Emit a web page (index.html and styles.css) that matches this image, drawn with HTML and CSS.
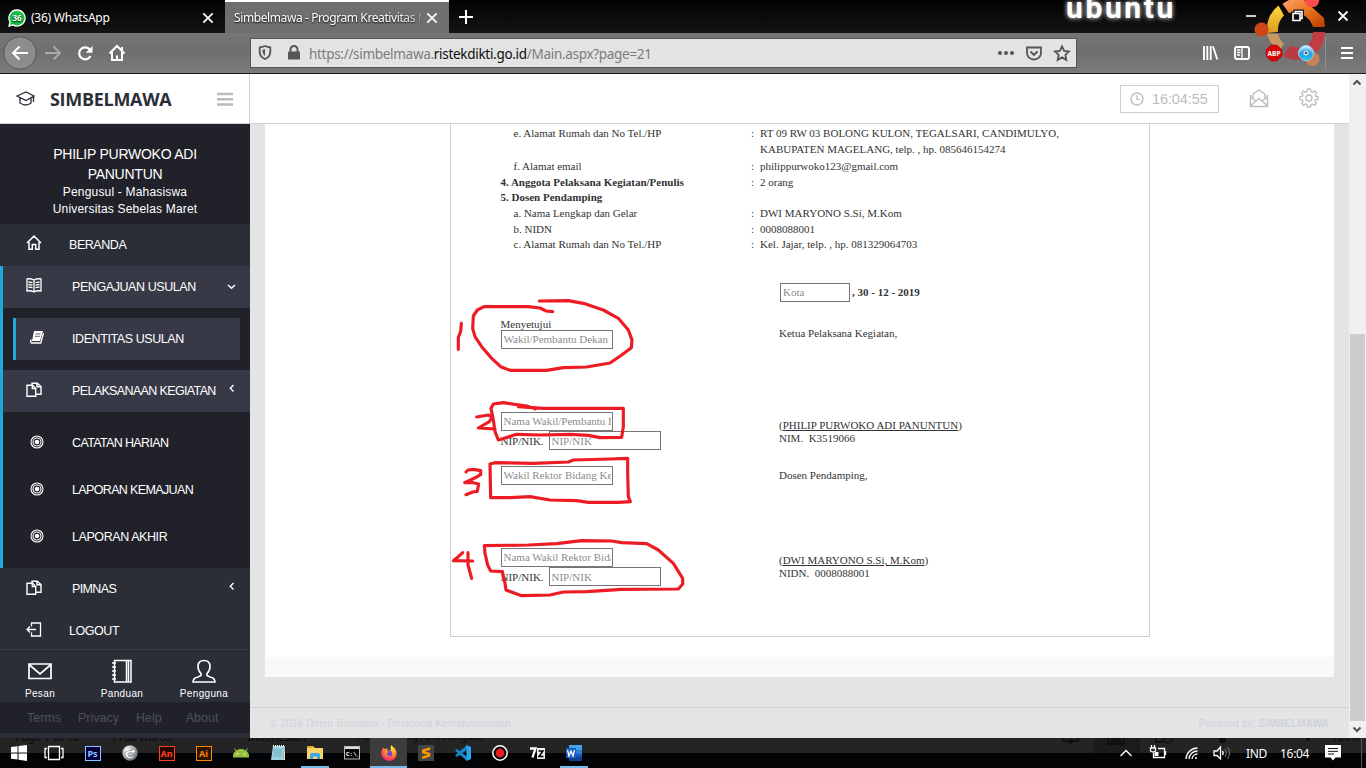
FILE: index.html
```html
<!DOCTYPE html>
<html lang="id">
<head>
<meta charset="utf-8">
<title>Simbelmawa - Program Kreativitas Mahasiswa</title>
<link rel="stylesheet" href="styles.css">
</head>
<body>
<svg width="0" height="0" class="defs">
  <defs>
    <symbol id="copy" viewBox="0 0 16 15"><path d="M6 3.5V1.2H11.2L15 4.5V12.3H10.5M11 1.2V4.7H15M1 3.2H6.5L9.7 6.5V14.2H1ZM6.3 3.2V6.6H9.7" fill="none" stroke="currentColor" stroke-width="1.4"/></symbol>
    <symbol id="target" viewBox="0 0 14 14"><circle cx="7" cy="7" r="6" fill="none" stroke="currentColor" stroke-width="1.1"/><circle cx="7" cy="7" r="4" fill="none" stroke="currentColor" stroke-width="1.1"/><circle cx="7" cy="7" r="2.3" fill="currentColor"/></symbol>
    <symbol id="cross" viewBox="0 0 12 12"><path d="M1.3 1.3L10.7 10.7M10.7 1.3L1.3 10.7" stroke="#f5f5f5" stroke-width="1.9"/></symbol>
    <linearGradient id="gy" x1="0" y1="0" x2="0" y2="1"><stop offset="0" stop-color="#ffd83c"/><stop offset="1" stop-color="#d99a20"/></linearGradient>
    <linearGradient id="go" x1="0" y1="0" x2="1" y2="1"><stop offset="0" stop-color="#ffa064"/><stop offset=".5" stop-color="#e87520"/><stop offset="1" stop-color="#b83a00"/></linearGradient>
    <radialGradient id="gf" cx=".65" cy=".2" r=".9"><stop offset="0" stop-color="#ffe843"/><stop offset=".45" stop-color="#ff9228"/><stop offset=".8" stop-color="#ff3560"/><stop offset="1" stop-color="#d9209a"/></radialGradient>
    <radialGradient id="gb" cx=".5" cy=".85" r=".8"><stop offset="0" stop-color="#1ec0f4"/><stop offset=".6" stop-color="#279fdd"/><stop offset="1" stop-color="#e8f7ff"/></radialGradient>
    <radialGradient id="gs" cx=".35" cy=".3" r=".8"><stop offset="0" stop-color="#fff"/><stop offset="1" stop-color="#5c6468"/></radialGradient>
  </defs>
</svg>

<header class="browser">
  <div class="tabs">
    <div class="tab">
      <svg width="18" height="18" viewBox="0 0 18 18"><path d="M9 1A8 8 0 1 1 5 15.9L1 17L2 13A8 8 0 0 1 9 1Z" fill="#15c143" stroke="#fff" stroke-width="1.3"/><text x="9" y="12.3" class="badge36" text-anchor="middle">36</text></svg>
      <span class="tab-title wa">(36) WhatsApp</span>
      <svg class="x" width="12" height="12"><use href="#cross"/></svg>
    </div>
    <div class="tab active">
      <span class="tab-title">Simbelmawa - Program Kreativitas M</span>
      <svg class="x" width="12" height="12"><use href="#cross"/></svg>
    </div>
    <svg class="plus" width="14" height="14" viewBox="0 0 14 14"><path d="M7 0V14M0 7H14" stroke="#fff" stroke-width="2"/></svg>
  </div>
  <div class="toolbar">
    <svg width="128" height="40" viewBox="0 33 128 40" fill="none" stroke="#fff" stroke-width="2">
      <circle cx="20" cy="53" r="16.3" fill="#8d8d8d" stroke="#555" stroke-width="1"/>
      <path d="M28 53H13M19.5 46.5L13 53L19.5 59.5"/>
      <path d="M45 53H60M53.5 46.5L60 53L53.5 59.5" stroke="#a9a9a9"/>
      <path d="M89.8 49.5A6 6 0 1 0 90.5 56" stroke-width="2.2"/><path d="M92.5 46V52.8H85.7Z" fill="#fff" stroke="none"/>
      <path d="M109.5 53.5L117 46L124.5 53.5M112 52V60H122V52M117 60V55.500"/><path d="M122 47V50"/>
    </svg>
    <div class="url">
      <svg width="50" height="28" viewBox="251 40 50 28" fill="none"><path d="M265 47Q268 48 270.300 48.500V53Q270 58 265 60Q260 58 259.700 53V48.500Q262 48 265 47Z" stroke="#555" stroke-width="1.8"/><path d="M265 50V57Q262.500 55.500 262.500 51Z" fill="#555"/><rect x="288" y="52.500" width="12" height="8" rx="1" fill="#555"/><path d="M290.500 53V50.500A3.500 3.500 0 0 1 297.500 50.500V53" stroke="#555" stroke-width="2"/></svg>
      <span class="address">https://simbelmawa.<b>ristekdikti.go.id</b>/Main.aspx?page=21</span>
      <svg class="url-end" width="80" height="28" viewBox="996 39 80 28" fill="none" stroke="#555" stroke-width="1.8"><g fill="#555" stroke="none"><circle cx="1000" cy="53" r="2"/><circle cx="1006" cy="53" r="2"/><circle cx="1012" cy="53" r="2"/></g><path d="M1027 47.500H1041V53A7 6.500 0 0 1 1027 53Z"/><path d="M1030.500 51.500L1034 55L1037.500 51.500"/><path d="M1062 46.300L1064.100 50.900L1069 51.500L1065.400 54.900L1066.300 59.900L1062 57.400L1057.700 59.900L1058.600 54.900L1055 51.500L1059.900 50.900Z"/></svg>
    </div>
  </div>
  <svg class="wallpaper" width="130" height="73" viewBox="1236 0 130 73">
    <path d="M1278.500 5.500L1284 15.500A21 21 0 0 0 1278 32L1267 33A30 30 0 0 1 1278.500 5.500Z" fill="url(#gy)"/>
    <path d="M1282.500 4A31 31 0 0 1 1289 0H1304L1324 18L1325 27H1313A20 20 0 0 0 1289 13Z" fill="url(#go)"/>
    <circle cx="1261.500" cy="29.500" r="7" fill="#cc4716"/><circle cx="1312" cy="0" r="7.300" fill="#fb4a50"/>
    <path d="M1267 34H1278A21 21 0 0 0 1284 44L1279 51A30 30 0 0 1 1267 34Z" fill="#c99864"/>
    <path d="M1325 32A32 32 0 0 1 1317 52L1306 47A20 20 0 0 0 1313 32Z" fill="#c43c43"/><path d="M1283 56L1290 46L1306 49L1306 59A33 33 0 0 1 1283 56Z" fill="#b93c45"/><circle cx="1312.500" cy="59" r="7" fill="#c78257"/>
  </svg>
  <div class="ubuntu">ubuntu</div>
  <svg class="controls" width="176" height="73" viewBox="1190 0 176 73" fill="none" stroke="#fff" stroke-width="1.600">
    <path d="M1246 16H1256"/><path d="M1293 13.500H1300V20.500H1293ZM1295.500 13V11.500H1302V18.500H1300.500" stroke="#111" stroke-width="4"/><path d="M1293 13.500H1300V20.500H1293ZM1295.500 13V11.500H1302V18.500H1300.500"/><path d="M1338.500 11.500L1347.500 20.500M1347.500 11.500L1338.500 20.500" stroke-width="1.800"/>
    <path d="M1204 46V60M1207.300 46V60M1210.700 46V60M1213 46.500L1217.300 59.500" stroke-width="1.900"/>
    <rect x="1235" y="47" width="14" height="12" rx="2" stroke-width="1.900"/><path d="M1242 47V59M1237 50H1240.500M1237 52.500H1240.500M1237 55H1240" stroke-width="1.300"/>
    <path d="M1271 45H1277L1282 50V56L1277 61H1271L1266 56V50Z" fill="#d40808" stroke="#a00" stroke-width=".5"/><text x="1274" y="56" class="abp" text-anchor="middle">ABP</text>
    <circle cx="1306" cy="53" r="7.500" fill="url(#gb)" stroke="#84d9ff" stroke-width="1"/><circle cx="1306" cy="53" r="2" fill="#456" stroke="#fff" stroke-width="1"/>
    <path d="M1325.500 37V70" stroke="#909090" stroke-width="1"/>
    <path d="M1341 48H1353M1341 53H1353M1341 58H1353" stroke-width="2"/>
  </svg>
</header>

<div class="page">
  <aside class="sidebar">
    <div class="brand">
      <svg width="20" height="16" viewBox="0 0 20 16" fill="none" stroke="#2b2e37" stroke-width="1.300"><path d="M1 5L10 1L18 5L10 9.500ZM4 7V12Q10 16 15 12V7M17.500 5.500V11"/></svg>
      <strong>SIMBELMAWA</strong>
      <svg class="burger" width="16" height="14" viewBox="0 0 16 14"><path d="M0 2H16M0 7.300H16M0 12.500H16" stroke="#b9bcc0" stroke-width="2.600"/></svg>
    </div>
    <div class="profile"><div class="name">PHILIP PURWOKO ADI<br>PANUNTUN</div><div>Pengusul - Mahasiswa<br>Universitas Sebelas Maret</div></div>
    <nav>
      <a class="item home"><svg width="16" height="16" viewBox="0 0 16 16"><path d="M1 8L8 1L15 8M3 7V14.300H6.300V9.500H9.700V14.300H13V7" fill="none" stroke="currentColor" stroke-width="1.500"/></svg><span>BERANDA</span></a>
      <div class="open">
        <a class="item head"><svg width="16" height="15" viewBox="0 0 16 15"><path d="M8 2V14M8 2Q4.500 .2 1 1V13Q5 12.200 8 14Q11 12.200 15 13V1Q11.500 .2 8 2M2.500 4L6.500 4.700M2.500 6.500L6.500 7.200M2.500 9L6.500 9.700M13.500 4L9.500 4.700M13.500 6.500L9.500 7.200M13.500 9L9.500 9.700" fill="none" stroke="currentColor" stroke-width="1.300"/></svg><span>PENGAJUAN USULAN</span><svg class="caret" width="9" height="6" viewBox="0 0 9 6"><path d="M1 1L4.500 4.300L8 1" fill="none" stroke="currentColor" stroke-width="1.500"/></svg></a>
        <div class="sub one"><a class="item selected"><svg width="14" height="13" viewBox="0 0 14 13"><path d="M4 0H13L10 10H2Z" fill="currentColor"/><path d="M13.500 2L10.800 12H1.700Q0 12 1.200 8.500" fill="none" stroke="currentColor" stroke-width="1.300"/><path d="M5.500 3H10.500M4.800 5.300H9.800" stroke="#383946" stroke-width=".8"/></svg><span>IDENTITAS USULAN</span></a></div>
        <a class="item head tight"><svg width="16" height="15"><use href="#copy"/></svg><span>PELAKSANAAN KEGIATAN</span><svg class="caret left" width="6" height="9" viewBox="0 0 6 9"><path d="M4.500 1L1.300 4.200L4.500 7.400" fill="none" stroke="currentColor" stroke-width="1.400"/></svg></a>
        <div class="sub three">
          <a class="item tight"><svg width="14" height="14"><use href="#target"/></svg><span>CATATAN HARIAN</span></a>
          <a class="item tight"><svg width="14" height="14"><use href="#target"/></svg><span>LAPORAN KEMAJUAN</span></a>
          <a class="item"><svg width="14" height="14"><use href="#target"/></svg><span>LAPORAN AKHIR</span></a>
        </div>
      </div>
      <a class="item closed tight"><svg width="16" height="15"><use href="#copy"/></svg><span>PIMNAS</span><svg class="caret left" width="6" height="9" viewBox="0 0 6 9"><path d="M4.500 1L1.300 4.200L4.500 7.400" fill="none" stroke="currentColor" stroke-width="1.400"/></svg></a>
      <a class="item logout"><svg width="16" height="15" viewBox="0 0 16 15"><path d="M5.500 4.500V1H14.500V14H5.500V10.500M1 7.500H10M4 4.500L1 7.500L4 10.500" fill="none" stroke="currentColor" stroke-width="1.300"/></svg><span>LOGOUT</span></a>
    </nav>
    <div class="quick">
      <a><svg width="24" height="24" viewBox="0 0 24 24"><path d="M1 5H23V19.500H1ZM1 5.500L12 15L23 5.500" fill="none" stroke="#fff" stroke-width="1.700"/></svg>Pesan</a>
      <a><svg width="24" height="24" viewBox="0 0 24 24"><path d="M4.500 1.500H21V23H4.500ZM16.500 1.500V23M18.500 1.500V23M2 4H6M2 8H6M2 12H6M2 16H6M2 20H6" fill="none" stroke="#fff" stroke-width="1.500"/></svg>Panduan</a>
      <a><svg width="24" height="24" viewBox="0 0 24 24"><path d="M1 23Q1 19 6 18L9 16.500V14.500Q6 11.500 6 7.500Q6 1.500 12 1.500Q18 1.500 18 7.500Q18 11.500 15 14.500V16.500L18 18Q23 19 23 23Z" fill="none" stroke="#fff" stroke-width="1.600"/></svg>Pengguna</a>
    </div>
    <div class="legal"><a>Terms</a><a>Privacy</a><a>Help</a><a>About</a></div>
  </aside>

  <main>
    <div class="topbar">
      <div class="clock"><svg width="14" height="14" viewBox="0 0 14 14"><circle cx="7" cy="7" r="6" fill="none" stroke="currentColor" stroke-width="1.300"/><path d="M7 3V7.500H10" fill="none" stroke="currentColor" stroke-width="1.200"/></svg><span>16:04:55</span></div>
      <svg class="mail" width="20" height="19" viewBox="0 0 20 19"><path d="M4 7V5L10 1L16 5V7M1.500 6V17.500H18.500V6M1.500 8L7 12L1.500 17M18.500 8L13 12L18.500 17M4 7V10L7 12L10 9.500L13 12L16 10V7" fill="none" stroke="#b9bec3" stroke-width="1.400"/></svg>
      <svg class="gear" width="20" height="20" viewBox="0 0 20 20" fill="none" stroke="#b9bec3" stroke-width="1.300"><circle cx="10" cy="10" r="3"/><path d="M8.500 1H11.500L12 3.600L13.600 4.300L15.800 2.800L17.700 4.800L16.200 6.900L16.700 8.200L19 8.700V11.400L16.500 11.900L15.900 13.400L17.400 15.500L15.500 17.400L13.400 15.900L12 16.500L11.500 19H8.500L8 16.500L6.500 15.900L4.500 17.400L2.600 15.500L4 13.400L3.500 12L1 11.400V8.700L3.500 8.200L4 6.900L2.600 4.800L4.500 2.800L6.500 4.200L8 3.600Z"/></svg>
    </div>
    <div class="panel">
      <section class="doc">
        <dl>
          <dt class="in">e. Alamat Rumah dan No Tel./HP</dt><dd>:</dd><dd>RT 09 RW 03 BOLONG KULON, TEGALSARI, CANDIMULYO,<br>KABUPATEN MAGELANG, telp. , hp. 085646154274</dd>
          <dt class="in">f. Alamat email</dt><dd>:</dd><dd>philippurwoko123@gmail.com</dd>
          <dt class="b">4. Anggota Pelaksana Kegiatan/Penulis</dt><dd>:</dd><dd>2 orang</dd>
          <dt class="b">5. Dosen Pendamping</dt><dd></dd><dd></dd>
          <dt class="in">a. Nama Lengkap dan Gelar</dt><dd>:</dd><dd>DWI MARYONO S.Si, M.Kom</dd>
          <dt class="in">b. NIDN</dt><dd>:</dd><dd>0008088001</dd>
          <dt class="in">c. Alamat Rumah dan No Tel./HP</dt><dd>:</dd><dd>Kel. Jajar, telp. , hp. 081329064703</dd>
        </dl>
        <div class="signatures">
          <div class="approve">
            <label>Menyetujui</label>
            <input placeholder="Wakil/Pembantu Dekan">
            <input class="gap" placeholder="Nama Wakil/Pembantu Dekan">
            <div class="nip"><span>NIP/NIK.</span><input placeholder="NIP/NIK"></div>
            <input class="rector" placeholder="Wakil Rektor Bidang Kemahasiswaan">
            <input class="gap" placeholder="Nama Wakil Rektor Bidang">
            <div class="nip"><span>NIP/NIK.</span><input placeholder="NIP/NIK"></div>
          </div>
          <div class="signers">
            <div class="date"><input placeholder="Kota"><b>, 30 - 12 - 2019</b></div>
            <p class="lead">Ketua Pelaksana Kegiatan,</p>
            <p class="signer">(<u>PHILIP PURWOKO ADI PANUNTUN</u>)</p>
            <p>NIM. &nbsp;K3519066</p>
            <p class="advisor">Dosen Pendamping,</p>
            <p class="signer2">(<u>DWI MARYONO S.Si, M.Kom</u>)</p>
            <p>NIDN. &nbsp;0008088001</p>
          </div>
        </div>
      </section>
    </div>
    <footer><span>© 2016 Dirjen Belmawa - Direktorat Kemahasiswaan.</span><span>Powered by: <b>SIMBELMAWA</b></span></footer>
  </main>
  <div class="scrollbar">
    <svg width="17" height="17" viewBox="0 0 17 17"><path d="M4.500 10.500L8 7L11.500 10.500" fill="none" stroke="#505050" stroke-width="2"/></svg>
    <div class="thumb"></div>
    <svg width="17" height="17" viewBox="0 0 17 17"><path d="M4.500 6.500L8 10L11.500 6.500" fill="none" stroke="#505050" stroke-width="2"/></svg>
  </div>
</div>

<svg class="marks" width="260" height="360" viewBox="0 0 780 1080" fill="none" stroke="#ed1c24" stroke-width="9.500" stroke-linecap="round" stroke-linejoin="round">
  <path d="M64 130L62 155L55 172V208"/>
  <path d="M338 95L318 93L300 84L265 80H132L112 90L100 108L98 145L105 170L125 200L155 235L182 260L210 271H320L370 263L440 261L510 249L545 225L574 203L576 180L565 150L535 115L490 90L430 70L385 62L298 63"/>
  <path d="M110 411L145 405L157 411L148 425L115 444L165 447"/>
  <path d="M286 387L260 378L190 368L160 372L153 385L160 420L165 455L175 480L230 463L300 465L390 463L445 466L480 473L545 472L550 440V385H310L235 380"/>
  <g transform="translate(0 480)">
    <path d="M78 96L84 90L100 88L122 92V104L104 114L74 128H100L116 132L112 154L98 156L78 164"/>
    <path d="M150 72L165 68L280 70L385 66L400 60L510 57L563 55V100L565 170L571 185L535 187H445L410 182L330 180L270 170L210 173H152Z"/>
    <path d="M68 338L55 350L40 362L98 363M84 338V375L95 415"/>
    <path d="M133 317L265 315L350 311L425 302L515 303L545 308L620 311L655 330L700 370L728 415V432L715 447L545 448L440 455L370 456L330 465L245 467L198 450L195 430L187 395L152 393L143 375L135 340Z"/>
  </g>
</svg>

<footer class="taskbar">
  <div class="ghost"><span class="g1">Page 1 of 16</span><span class="g2">7766 words</span><span class="g3">Indonesian</span><span class="g4">Accessibility: Investigate</span><span class="g5">100%</span>
    <svg width="366" height="15" viewBox="0 0 366 15" fill="none" stroke="#0c0c0c" stroke-width="1.300"><path d="M94 0H140V15H94Z" fill="#1b1b1b" stroke="none"/><path d="M63 0V3H78V0M70.500 0V5M68 3L70.500 5L73 3M108 0V6H124V0M111 1H121M111 3.500H121M156 0V4H163"/><circle cx="168" cy="1" r="4"/><path d="M220 0H225V4H220ZM307 0H309V2H307Z" fill="#0c0c0c"/></svg>
  </div>
  <div class="apps">
    <a><svg width="16" height="16" viewBox="0 0 16 16" fill="#fff"><path d="M0 2L6.500 1.200V7.500H0ZM7.500 1L16 0V7.500H7.500ZM0 8.500H6.500V14.500L0 13.800ZM7.500 8.500H16V16L7.500 14.800Z"/></svg></a>
    <a class="views"><svg width="20" height="16" viewBox="0 0 20 16" fill="none" stroke="#fff" stroke-width="1.300"><path d="M4.500 1.500H15.500V14.500H4.500ZM3 3.500H1V12.500H3M17 3.500H19V12.500H17"/></svg></a>
    <a><i class="app ps">Ps</i></a>
    <a><svg width="16" height="16" viewBox="0 0 16 16"><circle cx="8" cy="8" r="7.700" fill="url(#gs)"/><path d="M3 9Q4 5 10 5.500L9 3.500L14 6L10 9L9.500 7Q5 7 6 11Q9 13 13 10Q10 15 6 13Q3 12 3 9Z" fill="#fff" stroke="#667" stroke-width=".5"/></svg></a>
    <a><i class="app an">An</i></a>
    <a><i class="app ai">Ai</i></a>
    <a><svg width="16" height="16" viewBox="0 0 16 16"><path d="M0 12A8 7.500 0 0 1 16 12ZM3 6L1.500 3.500M13 6L14.500 3.500" fill="#97c03d" stroke="#97c03d"/><circle cx="4.500" cy="9" r=".8" fill="#fff"/><circle cx="11.500" cy="9" r=".8" fill="#fff"/></svg></a>
    <a><svg width="16" height="16" viewBox="0 0 16 16"><path d="M3 1H15L13 15H1Z" fill="#9bd0dd"/><path d="M13 15L15 1V15Z" fill="#e9e2cc"/><path d="M3 1H15" stroke="#e7eff2" stroke-width="2" stroke-dasharray="1 1"/><path d="M4 5H12M3.800 7H11.800M3.500 9H11.500M3.200 11H11" stroke="#5d9fb3" stroke-width=".7"/></svg></a>
    <a class="running"><svg width="16" height="16" viewBox="0 0 16 16"><path d="M0 1H6L8 3H16V14H0Z" fill="#f8d36b"/><path d="M0 1H6L7 3H0Z" fill="#e4a824"/><path d="M3 14V10Q3 8 5 8H11Q13 8 13 10V14H10V11.500H6V14Z" fill="#3aa8e8"/></svg></a>
    <a><svg width="16" height="14" viewBox="0 0 16 14"><rect x=".5" y=".5" width="15" height="12.500" fill="#090909" stroke="#bbb"/><path d="M1 2H15" stroke="#d7dbe4" stroke-width="2"/><text x="2" y="10" class="cmd">C:\_</text></svg></a>
    <a class="current"><svg width="16" height="16" viewBox="0 0 16 16"><path d="M8 16A8 8 0 0 1 .3 7Q.7 4 2.300 2.500L3.500 4L6 3.500Q7 4 6 6L10 5Q9 2 10.500 0Q12 2.500 14 3.500Q17 8 14.500 12.500Q12 16 8 16Z" fill="url(#gf)"/><circle cx="8" cy="8.500" r="3.200" fill="#7b43d2"/><path d="M3 6Q6 4.500 8 7L5.500 8.500Q6 11 9 11Q6 13 4 10Z" fill="#ff8a29"/></svg></a>
    <a><svg width="16" height="16" viewBox="0 0 16 16"><rect width="16" height="16" fill="#444"/><path d="M12 3.500L5.200 5.600V7.300L11 8.900V10.600L4.200 12.700" fill="none" stroke="#ff9800" stroke-width="2.500"/></svg></a>
    <a><svg width="16" height="16" viewBox="0 0 16 16"><path d="M12 0V4.500L2 12L0 10.500ZM0 5.500L2 4L12 11.500V16Z" fill="#1587cc"/><path d="M11.500 0L16 2V14L11.500 16Z" fill="#29a8ef"/></svg></a>
    <a><svg width="16" height="16" viewBox="0 0 16 16"><circle cx="8" cy="8" r="7.200" fill="#050505" stroke="#fff" stroke-width="1.500"/><circle cx="8" cy="8" r="4.400" fill="#ed1c24"/></svg></a>
    <a><svg width="16" height="14" viewBox="0 0 16 14"><rect x="8" y="2" width="8" height="11" fill="#eee"/><path d="M1 2.500H6.500L3.500 11.500" fill="none" stroke="#fff" stroke-width="2.300"/><path d="M9.500 5H14L10 10.500H14.500" fill="none" stroke="#000" stroke-width="1.500"/></svg></a>
    <a class="running"><svg width="16" height="16" viewBox="0 0 16 16"><path d="M3 0H16V16H3Z" fill="#185abd"/><path d="M3 0H16V5H3Z" fill="#41a5ee"/><path d="M3 5H16V9H3Z" fill="#2b7cd3"/><path d="M3 12H16V16H3Z" fill="#103f91"/><rect y="3" width="10" height="10" fill="#185abd"/><path d="M1.500 5L3 11L5 6L7 11L8.500 5" fill="none" stroke="#fff" stroke-width="1.300"/></svg></a>
  </div>
  <div class="tray">
    <svg width="116" height="30" viewBox="1118 738 116 30" fill="none" stroke="#fff" stroke-width="1.300"><path d="M1120.500 756L1126 750.500L1131.500 756"/><path d="M1158 748.500H1164.500V757.500H1153.500V753M1165.500 751V755M1151.500 745V748M1154.500 745V748M1150.500 748H1155.500V751Q1153 753 1150.500 751Z"/><rect x="1154.500" y="752" width="4" height="4" fill="#fff" stroke="none"/><path d="M1186 759A11.500 11.500 0 0 1 1197.500 748M1189 759A8.500 8.500 0 0 1 1197.500 751M1192 759A5.500 5.500 0 0 1 1197.500 754M1195 758H1197"/><path d="M1214 751H1217L1220.500 747V759L1217 755.500H1214Z"/><path d="M1222.500 751Q1224 753 1222.500 755"/><path d="M1225 749Q1228 753 1225 757M1227.500 747Q1231.500 753 1227.500 759" stroke="#777" stroke-width="1"/></svg>
    <span class="lang">IND</span><span class="time">16:04</span>
    <svg width="16" height="16" viewBox="0 0 16 16"><path d="M0 0H16V12.500H10.500L8 15.500L5.500 12.500H0Z" fill="#fff"/><path d="M3 3.500H13M3 6.300H13M3 9H9" stroke="#111"/></svg>
  </div>
</footer>
</body>
</html>
```
FILE: styles.css
```css
* { box-sizing: border-box; }
body { margin: 0; width: 1366px; height: 768px; overflow: hidden; position: relative; font-family: "Liberation Sans", Arial, sans-serif; display: flex; flex-direction: column; }
svg { display: block; flex: none; }
p, dl, dd { margin: 0; }
.defs { position: absolute; }

.browser { height: 74px; flex: none; position: relative; border-bottom: 1px solid #1b1b1b; font-family: "Noto Sans", sans-serif; }
.tabs { height: 33px; display: flex; background: linear-gradient(#020202, #141414); color: #fff; font-size: 12px; }
.tab { width: 225px; display: flex; align-items: center; padding: 2px 11px 0 8px; text-shadow: 0 1px 2px #000; }
.tab-title { white-space: nowrap; letter-spacing: -.25px; line-height: 20px; }
.wa { margin-left: 5px; }
.tab .x { margin-left: auto; }
.tab.active { width: 224px; background: #6f6f6f; border-top: 2px solid #fff; padding-top: 0; padding-left: 9px; }
.active .tab-title { letter-spacing: -.4px; width: 188px; overflow: hidden; -webkit-mask-image: linear-gradient(90deg, #000 160px, rgba(0,0,0,.6) 182px, transparent 188px); }
.plus { margin: 10px; }
.badge36 { font: bold 8px "Noto Sans", sans-serif; fill: #fff; }
.abp { font: bold 6.5px "Noto Sans", sans-serif; fill: #fff; stroke: none; }
.toolbar { height: 40px; display: flex; background: linear-gradient(#767676, #6f6f6f 45%, #7b7b7b); }
.url { margin: 5px 0 0 122px; width: 827px; height: 30px; border: 1px solid #555; background: #e3e3e3; display: flex; align-items: center; }
.address { margin-left: 8px; font-size: 13.5px; letter-spacing: -.3px; color: #7c7c7c; white-space: nowrap; padding-top: 1px; }
.address b { font-weight: 400; color: #0c0c0c; }
.url-end { margin-left: auto; }
.wallpaper { position: absolute; right: 0; top: 0; }
.controls { position: absolute; right: 0; top: 0; }
.ubuntu { position: absolute; left: 1061px; top: 0; width: 122px; height: 28px; overflow: hidden; color: #fff; font: bold 30px/15px Roboto, sans-serif; letter-spacing: 2.6px; padding-left: 5px; text-shadow: 0 0 5px #fff; }

.page { height: 664px; flex: none; display: flex; }
.sidebar { width: 250px; background: #2b2e37; color: #fff; display: flex; flex-direction: column; }
.brand { height: 50px; background: #fff; border: solid #d0d2d4; border-width: 0 1px 1px 0; color: #2b2e37; display: flex; align-items: center; padding: 1px 16px 0; }
.brand strong { margin-left: 14px; font: 700 18px "Open Sans", sans-serif; letter-spacing: -.3px; }
.burger { margin-left: auto; }
.profile { height: 100px; background: #212129; text-align: center; padding-top: 20px; font-size: 12px; line-height: 17px; letter-spacing: .18px; }
.name { font-size: 14px; line-height: 20px; letter-spacing: -.25px; }
.profile div + div { padding-top: 0; }
.item { height: 42px; display: flex; align-items: center; font-size: 12.5px; padding-left: 26px; color: #fff; letter-spacing: -.45px; white-space: nowrap; }
.item span { margin-left: 27px; margin-top: -1px; }
.item > svg:first-child { margin-top: -4px; }
.open { border-left: 3px solid #1fa8dc; background: #212129; }
.nav .item, .open .item { letter-spacing: -.42px; }
.open .tight, .tight { letter-spacing: -.64px; }
.head { background: #383946; padding-left: 23px; }
.head span, .closed span { margin-left: 30px; }
.caret { margin-left: auto; margin-right: 14px; }
.caret.left { margin-right: 15px; margin-top: -6px; }
.sub.one { padding: 10px; height: 62px; }
.selected { background: #383946; border-left: 3px solid #1fa8dc; padding-left: 14px; }
.selected span { margin-left: 28px; }
.sub.three { height: 156px; padding-top: 7px; }
.three .item { height: 47px; padding-left: 27px; }
.three span { margin: 0 0 0 28px; }
.three .item > svg:first-child { margin-top: -2px; }
.logout { height: 39px; padding-top: 4px; }
.quick { height: 53px; border-top: 1px solid #3c3d40; display: flex; justify-content: space-between; padding: 9px 26px 0 20px; font-size: 10px; line-height: 14px; }
.quick a { width: 40px; display: flex; flex-direction: column; align-items: center; gap: 4px; white-space: nowrap; letter-spacing: .35px; }
.legal { height: 31px; background: #212129; color: #4b4f61; font-size: 12.500px; display: flex; align-items: center; padding-left: 27px; gap: 17px; }
.legal a:nth-child(4) { margin-left: 7px; }

main { width: 1099px; background: #e3e4e6; display: flex; flex-direction: column; }
.topbar { height: 50px; background: #fff; border-bottom: 1px solid #cfd1d3; display: flex; align-items: center; padding-left: 870px; }
.clock { width: 99px; height: 28px; border: 1px solid #cbd0d5; display: flex; align-items: center; gap: 8px; padding-left: 9px; color: #b9bec3; font-size: 14.5px; letter-spacing: -.1px; }
.mail { margin-left: 30px; } .gear { margin-left: 30px; margin-top: -2px; }
.panel { margin: 0 15px; height: 553px; background: #fff; border-bottom: 20px solid #f7f9fb; padding-left: 185px; }
.doc { width: 700px; height: 513px; border: 1px solid #d0d0d0; border-top: 0; padding-left: 49.5px; font: 11px "Liberation Serif", "Times New Roman", serif; color: #333; }
.doc dl { display: grid; grid-template-columns: 250.5px 9px 1fr; line-height: 15.700px; padding-top: 2px; height: 127px; align-content: start; grid-template-rows: 33px; grid-auto-rows: 15.700px; }
.in { padding-left: 13px; } .b { font-weight: 700; }
.doc p, .doc label { line-height: 12px; display: block; }
.signatures { display: grid; grid-template-columns: 278.5px 1fr; }
.doc input { width: 112px; height: 19px; border: 1px solid #767676; padding: 0 1px 1px 2px; margin: 0; font: inherit; display: block; background: #fff; border-radius: 0; }
.doc input::placeholder { color: #8c8c8c; opacity: 1; }
.approve { padding-top: 67px; }
.doc .gap { margin-top: 63px; } .doc .rector { margin-top: 16px; }
.nip { display: flex; align-items: center; } .nip span { width: 48px; }
.doc .nip input { padding: 1px 2px; }
.signers { padding-top: 32px; }
.date { display: flex; align-items: center; gap: 2px; margin-left: 1px; }
.doc .date input { width: 70px; }
.date b { padding-bottom: 2px; }
.lead { margin-top: 25px; } .signer { margin: 80px 0 1px; } .advisor { margin-top: 25px; } .signer2 { margin: 73px 0 1px; }
main footer { margin-top: 30px; border-top: 1px solid #d0d3d5; height: 31px; display: flex; align-items: center; justify-content: space-between; padding: 0 20px; font-size: 10px; letter-spacing: .15px; color: #d0d3d6; }
.scrollbar { width: 17px; background: #f0f0f0; display: flex; flex-direction: column; }
.thumb { height: 387px; background: #cdcdcd; margin: auto 1px 0; }
.marks { position: absolute; left: 440px; top: 280px; }

.taskbar { height: 30px; position: relative; display: flex; justify-content: space-between; background: linear-gradient(#242424 15px, #030405 15px); color: #fff; }
.ghost { position: absolute; inset: 0; overflow: hidden; color: #090909; font: 11.5px/16px "Noto Sans", sans-serif; letter-spacing: -.2px; white-space: nowrap; }
.ghost span { position: absolute; top: -9px; }
.ghost svg { position: absolute; right: 0; top: 0; }
.ghost .g4 { top: -10px; }
.g1 { left: 15px; } .g2 { left: 111px; } .g3 { left: 247px; } .g4 { left: 357px; } .g5 { left: 1331px; }
.apps { display: flex; position: relative; }
.apps a { width: 37px; height: 30px; display: flex; align-items: center; justify-content: center; }
.apps .views { padding-right: 3px; }
.apps .running { background: linear-gradient(#76b9ed, #76b9ed) center bottom / 28px 2px no-repeat; }
.apps .current { background: #3d3d3d; border-bottom: 2px solid #76b9ed; padding-top: 2px; }
.app { width: 16px; height: 15px; border: 1px solid; font: bold 9px/13px "Noto Sans", sans-serif; text-align: center; }
.ps { color: #8bc5ff; background: #08003c; } .an { color: #ff3d25; background: #250603; } .ai { color: #ff8500; background: #291400; }
.cmd { font: bold 6px "Liberation Mono", monospace; fill: #fff; }
.tray { position: relative; display: flex; align-items: center; padding-right: 25px; font: 12px "Noto Sans", sans-serif; letter-spacing: -.3px; }
.tray::after { content: ""; position: absolute; right: 4px; top: 0; width: 1px; height: 30px; background: #555; }
.lang { width: 22px; margin-left: 12px; } .time { width: 30px; margin: 0 15px 0 12px; }
```
